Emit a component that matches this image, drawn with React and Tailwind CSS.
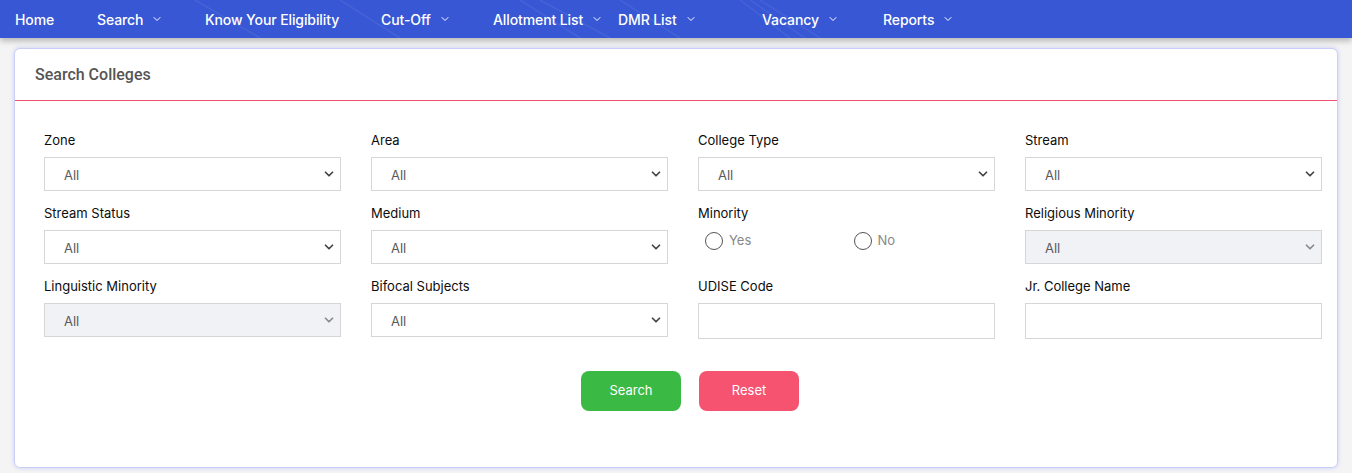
import { ChevronDown } from "lucide-react";

const navItems = [
    { label: "Home", drop: false, w: "w-[82px]" },
    { label: "Search", drop: true, w: "w-[108px]" },
    { label: "Know Your Eligibility", drop: false, w: "w-[176px]" },
    { label: "Cut-Off", drop: true, w: "w-[112px]" },
    { label: "Allotment List", drop: true, w: "w-[125px]" },
    { label: "DMR List", drop: true, w: "w-[144px]" },
    { label: "Vacancy", drop: true, w: "w-[121px]" },
    { label: "Reports", drop: true, w: "w-[100px]" },
]

function SelectField({ label, disabled }) {
    return (
        <div className="flex flex-col">
            <label className="text-[13px] font-normal text-[#0d0d0d] leading-[20px] mb-[7px]">{label}</label>
            <div className={`relative h-[34px] border border-[#d6d6d6] ${disabled ? "bg-[#f1f2f6]" : "bg-white"}`}>
                <span className="absolute left-[19px] top-[9px] text-[13px] leading-[16px] text-[#5a5a5a]">All</span>
                <ChevronDown
                    className={`absolute right-[4px] top-[9px] w-[14px] h-[14px] ${disabled ? "text-[#8a8a8a]" : "text-[#444]"}`}
                    strokeWidth={3}
                />
            </div>
        </div>
    )
}

function TextField({ label }) {
    return (
        <div className="flex flex-col">
            <label className="text-[13px] font-normal text-[#0d0d0d] leading-[20px] mb-[7px]">{label}</label>
            <div className="h-[36px] border border-[#d6d6d6] bg-white" />
        </div>
    )
}

function Radio({ label }) {
    return (
        <div className="flex items-center w-1/2 pl-[7px]">
            <span className="w-[18px] h-[18px] rounded-full border-[1.5px] border-[#555] bg-white" />
            <span className="ml-[6px] text-[13px] text-[#888]">{label}</span>
        </div>
    )
}

export default function App() {
    return (
        <div className="min-h-[473px] bg-[#f4f4f4] font-['Inter','Liberation_Sans',sans-serif]">
            {/* top navigation */}
            <nav className="relative h-[38px] bg-[#3757d4] overflow-hidden shadow-[0_3px_6px_rgba(0,0,0,0.25)] z-10">
                <svg className="absolute inset-0 w-full h-full" viewBox="0 0 1352 38" preserveAspectRatio="none">
                    <g stroke="#ffffff" strokeOpacity="0.07" strokeWidth="1.5">
                        <line x1="195" y1="0" x2="260" y2="38" />
                        <line x1="340" y1="0" x2="400" y2="38" />
                        <line x1="520" y1="0" x2="580" y2="38" />
                        <line x1="540" y1="0" x2="610" y2="38" />
                        <line x1="620" y1="0" x2="680" y2="38" />
                        <line x1="740" y1="0" x2="790" y2="38" />
                        <line x1="750" y1="0" x2="805" y2="38" />
                        <line x1="760" y1="0" x2="820" y2="38" />
                    </g>
                </svg>
                <ul className="relative flex items-center h-full pl-[15px]">
                    {navItems.map((item) => (
                        <li key={item.label} className={`flex items-center shrink-0 ${item.w} text-white text-[14px] font-medium tracking-[-0.1px]`}>
                            <span>{item.label}</span>
                            {item.drop && <ChevronDown className="ml-[8px] w-[12px] h-[12px]" strokeWidth={2} />}
                        </li>
                    ))}
                </ul>
            </nav>

            <div className="px-[14px] pt-[10px] pb-[4px]">
                <div className="bg-white rounded-[6px] border border-[#c9cff8] shadow-[0_0_4px_rgba(120,135,245,0.35)] h-[420px]">
                    <div className="h-[52px] flex items-center px-[20px] border-b-[1.5px] border-[#f0506e]">
                        <h2 className="font-['Roboto',sans-serif] text-[16px] font-medium text-[#555] pt-[1px]">Search Colleges</h2>
                    </div>

                    <div className="pl-[29px] pr-[15px] pt-[29px]">
                        <div className="grid grid-cols-4 gap-x-[30px] gap-y-[12px]">
                            <SelectField label="Zone" />
                            <SelectField label="Area" />
                            <SelectField label="College Type" />
                            <SelectField label="Stream" />

                            <SelectField label="Stream Status" />
                            <SelectField label="Medium" />
                            <div className="flex flex-col">
                                <label className="text-[13px] font-normal text-[#0d0d0d] leading-[20px] mb-[8px]">Minority</label>
                                <div className="flex">
                                    <Radio label="Yes" />
                                    <Radio label="No" />
                                </div>
                            </div>
                            <SelectField label="Religious Minority" disabled />

                            <SelectField label="Linguistic Minority" disabled />
                            <SelectField label="Bifocal Subjects" />
                            <TextField label="UDISE Code" />
                            <TextField label="Jr. College Name" />
                        </div>

                        <div className="flex justify-center gap-[18px] mt-[32px] pl-[14px]">
                            <button className="w-[100px] h-[40px] rounded-[8px] bg-[#3bb945] text-white text-[13px]">Search</button>
                            <button className="w-[100px] h-[40px] rounded-[8px] bg-[#f5536f] text-white text-[13px]">Reset</button>
                        </div>
                    </div>
                </div>
            </div>
        </div>
    )
}
